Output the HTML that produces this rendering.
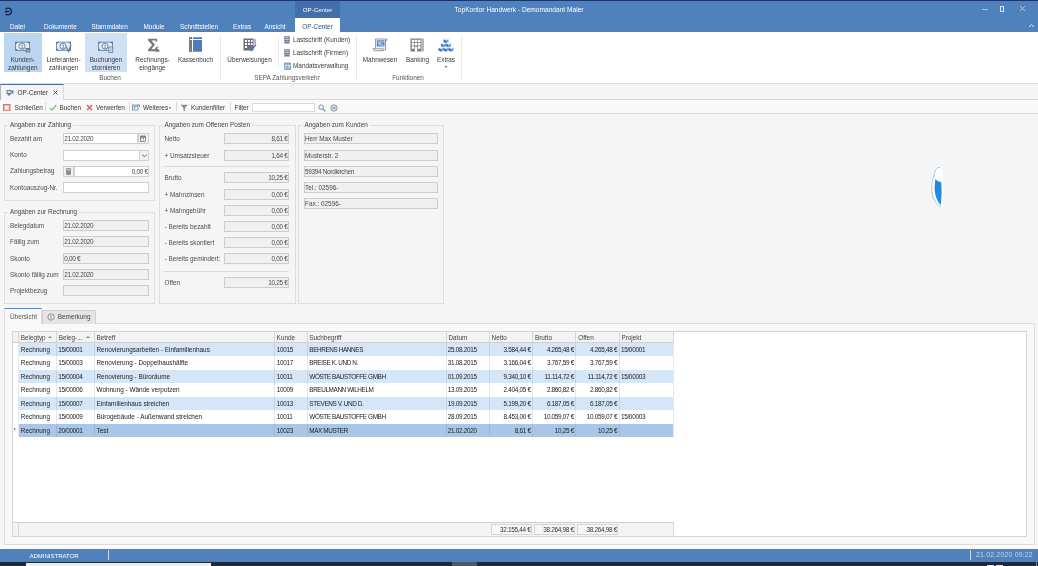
<!DOCTYPE html>
<html lang="de">
<head>
<meta charset="utf-8">
<title>TopKontor Handwerk - Demomandant Maler</title>
<style>
*{box-sizing:border-box;margin:0;padding:0}
html,body{width:1038px;height:566px;overflow:hidden;background:#f5f5f5}
body{position:relative;font-family:"Liberation Sans",sans-serif;font-size:6.4px;color:#3a3a3a;line-height:8px}
#wrap{position:absolute;left:0;top:0;width:1038px;height:566px;will-change:transform}
.a{position:absolute;white-space:nowrap}
.w{color:#fff}
.c{text-align:center}
.r{text-align:right}
/* title */
#title{left:0;top:0;width:1038px;height:31.9px;background:#4f81bd}
#topline{left:0;top:0;width:1038px;height:1px;background:#17356f}
#ctx{left:295px;top:0;width:45px;height:18px;background:#426fa9;border-top:1px solid #1f3f7c}
#acttab{left:295px;top:18px;width:45px;height:14px;background:#fff}
#ribbon{left:0;top:31.9px;width:1038px;height:52.1px;background:#fff;border-bottom:1px solid #dcdcdc}
.hl1{background:#bbd6f1}
.hl2{background:#cfe2f5}
.gsep{width:1px;background:#e9e9e9;top:34.5px;height:45.5px}
.glabel{top:74.2px;color:#555}
/* doc tabs */
#tabstrip{left:0;top:84px;width:1038px;height:16px;background:#f5f5f5;border-bottom:1px solid #dadada}
#doctab{left:0;top:84px;width:64px;height:16px;background:#f3f5f9;border-top:1px solid #526d93;border-right:1px solid #dadada;border-left:1px solid #b4b8be}
#toolbar{left:0;top:100px;width:1038px;height:13.7px;background:#f8f8f8;border-bottom:1px solid #dbdbdb}
.tsep{top:102px;width:1px;height:9px;background:#d8d8d8}
/* groups */
.grp{border:1px solid #dedede}
.gl{background:#f5f5f5;padding:0 2px;color:#444}
.fw{background:#fff;border:1px solid #d0d0d0;height:11px}
.fg{background:#f0f0f0;border:1px solid #cdcdcd;height:11px}
.ft{line-height:9px;padding:0 1.5px 0 0;color:#4a4a4a}
.n{letter-spacing:-0.3px}
.hsep{height:1px;background:#dcdcdc}
/* grid */
#page{left:4px;top:323px;width:1030.8px;height:221.7px;border:1px solid #dcdcdc;background:#f8f8f8}
#grid{left:12px;top:331px;width:1015px;height:206px;border:1px solid #d5d5d5;background:#fff}
#ghead{left:13px;top:332px;width:660.3px;height:11px;background:#f3f3f3;border-bottom:1px solid #d0d0d0}
.row{left:19px;width:654px;height:13.5px}
.ra{background:#d4e6f8}
.rs{background:#a9c6e8}
.cell{line-height:13.5px;color:#222}
.hc{line-height:11px;color:#444}
.vl{width:1px;background:#d6d6d6}
#gfoot{left:13px;top:522px;width:660.3px;height:14px;background:#f3f3f3;border-top:1px solid #d0d0d0}
.sum{top:523.6px;height:11px;border:1px solid #d6d6d6;background:#f6f6f6;line-height:9px;text-align:right;padding-right:0.3px;color:#333}
/* status */
#sgap{left:0;top:545px;width:1038px;height:4px;background:#fafafa}
#status{left:0;top:548.5px;width:1038px;height:13px;background:#4f81bd}
#task{left:0;top:561.5px;width:1038px;height:5px;background:#1b2b38}
</style>
</head>
<body>
<div id="wrap">
<!-- TITLE BAR -->
<div class="a" id="title"></div>
<div class="a" id="topline"></div>
<div class="a" id="ctx"></div>
<div class="a" id="acttab"></div>
<div class="a w c" style="left:295px;top:5.8px;width:45px;font-size:6.2px">OP-Center</div>
<div class="a w" style="left:454.5px;top:6px;font-size:6.6px">TopKontor Handwerk - Demomandant Maler</div>
<div class="a w" style="left:10px;top:23px">Datei</div>
<div class="a w" style="left:44px;top:23px">Dokumente</div>
<div class="a w" style="left:91.5px;top:23px">Stammdaten</div>
<div class="a w" style="left:143.5px;top:23px">Module</div>
<div class="a w" style="left:180px;top:23px">Schnittstellen</div>
<div class="a w" style="left:233px;top:23px">Extras</div>
<div class="a w" style="left:264.5px;top:23px">Ansicht</div>
<div class="a c" style="left:295px;top:23px;width:45px;color:#33507c">OP-Center</div>

<!-- RIBBON -->
<div class="a" id="ribbon"></div>


<!-- ribbon buttons -->
<div class="a hl1" style="left:3.5px;top:33px;width:38.5px;height:39px"></div>
<div class="a hl2" style="left:85px;top:33px;width:42px;height:39px"></div>
<svg class="a" style="left:14.5px;top:40.500px" width="16" height="12" viewBox="0 0 32 24"><rect x="1.200" y="2.200" width="28" height="16.500" fill="#e4edf7" stroke="#5d7894" stroke-width="1.600"/><path d="M1 2h5l-5 5zM29.500 2h-5l5 5zM1 19h5l-5-5zM29.500 19h-5l5-5z" fill="#58728f"/><ellipse cx="14" cy="10.500" rx="6.200" ry="6.200" fill="#eef4fb" stroke="#58728f" stroke-width="1.700"/><path d="M12.200 9.500l2.300-2.300v7.200M12 14.400h5" fill="none" stroke="#5f86b3" stroke-width="1.500"/><path d="M21 14h9.500v9H21z" fill="#66788f"/><path d="M24 16.500v5M27.500 17.500v4" stroke="#dfe9f5" stroke-width="1.300"/></svg>
<svg class="a" style="left:55.5px;top:40.500px" width="16" height="12" viewBox="0 0 32 24"><rect x="1.200" y="2.200" width="28" height="16.500" fill="#e4edf7" stroke="#5d7894" stroke-width="1.600"/><path d="M1 2h5l-5 5zM29.500 2h-5l5 5zM1 19h5l-5-5zM29.500 19h-5l5-5z" fill="#58728f"/><ellipse cx="14" cy="10.500" rx="6.200" ry="6.200" fill="#eef4fb" stroke="#58728f" stroke-width="1.700"/><path d="M12.200 9.500l2.300-2.300v7.200M12 14.400h5" fill="none" stroke="#5f86b3" stroke-width="1.500"/><path d="M20 11l5 10 5-13" fill="none" stroke="#6d7c8e" stroke-width="2.600"/></svg>
<svg class="a" style="left:97.5px;top:40.500px" width="16" height="12" viewBox="0 0 32 24"><rect x="1.200" y="2.200" width="28" height="16.500" fill="#e4edf7" stroke="#5d7894" stroke-width="1.600"/><path d="M1 2h5l-5 5zM29.500 2h-5l5 5zM1 19h5l-5-5zM29.500 19h-5l5-5z" fill="#58728f"/><ellipse cx="14" cy="10.500" rx="6.200" ry="6.200" fill="#eef4fb" stroke="#58728f" stroke-width="1.700"/><path d="M12.200 9.500l2.300-2.300v7.200M12 14.400h5" fill="none" stroke="#5f86b3" stroke-width="1.500"/><path d="M21.500 12h8v11h-8z" fill="#e6edf6" stroke="#66788f" stroke-width="1.700"/><path d="M23.500 16h4M23.500 19.500h4" stroke="#66788f" stroke-width="1.200"/></svg>
<div class="a c" style="left:3.5px;top:56px;width:38.5px">Kunden-<br>zahlungen</div>
<div class="a c" style="left:43px;top:56px;width:41px">Lieferanten-<br>zahlungen</div>
<div class="a c" style="left:85px;top:56px;width:42px">Buchungen<br>stornieren</div>
<!-- sigma -->
<svg class="a" style="left:146.7px;top:37.8px" width="13.5" height="14" viewBox="0 0 28 28"><path d="M2 1h19v6h-3V4.500H9.500l7 9-7.500 9.500h8v-3h3.500v7H2v-3l8.500-10L2 4z" fill="#76787c"/><path d="M17.500 19c1.500-2.500 5-2.500 7-1l-1 2c-1.500-1-3.500-1-4 0 2 1.500 6 2 6.500 5.500v2.500h-8.500z" fill="#6f7f96"/></svg>
<div class="a c" style="left:130px;top:56px;width:45px">Rechnungs-<br>eingänge</div>
<!-- kassenbuch -->
<svg class="a" style="left:188.8px;top:37px" width="13.5" height="15" viewBox="0 0 27 30"><rect x="0.500" y="0.500" width="26" height="29" fill="#4a7ebb"/><rect x="0.500" y="0.500" width="5.500" height="29" fill="#76787c"/><rect x="6" y="0.500" width="2" height="29" fill="#fff"/><rect x="2" y="4" width="24.500" height="2" fill="#eef3f9"/></svg>
<div class="a c" style="left:175px;top:56px;width:41px">Kassenbuch</div>
<div class="a gsep" style="left:220px"></div>
<div class="a c glabel" style="left:90px;width:40px">Buchen</div>
<!-- ueberweisungen -->
<svg class="a" style="left:243px;top:38px" width="14" height="14" viewBox="0 0 28 28"><rect x="1" y="1" width="20" height="24" fill="#6d6f73"/><path d="M4 4h4v4H4zM10 4h4v4h-4zM16 4h3v4h-3zM4 10h4v4H4zM10 10h4v4h-4zM16 10h3v4h-3zM4 16h4v4H4z" fill="#fff"/><path d="M24 2v10" stroke="#6d6f73" stroke-width="2"/><path d="M11 20l5 5 10-12" fill="none" stroke="#4a7ebb" stroke-width="3"/></svg>
<div class="a c" style="left:224px;top:56px;width:51px">Überweisungen</div>
<div class="a" style="left:277.5px;top:37px;width:1px;height:30px;background:#ececec"></div>
<!-- small items -->
<svg class="a" style="left:284px;top:36px" width="6" height="8" viewBox="0 0 12 16"><rect x="0.5" y="0.5" width="11" height="10" fill="#63718a"/><path d="M1 3.500h10M1 7h10" stroke="#e4e9f1" stroke-width="1.300"/><path d="M6 0v10" stroke="#e4e9f1" stroke-width="0.800"/><path d="M2 10v6M6 10v6M10 10v6M2 13h8" stroke="#63718a" stroke-width="1.800"/></svg>
<svg class="a" style="left:284px;top:48.5px" width="6" height="8" viewBox="0 0 12 16"><rect x="0.5" y="0.5" width="11" height="10" fill="#63718a"/><path d="M1 3.500h10M1 7h10" stroke="#e4e9f1" stroke-width="1.300"/><path d="M6 0v10" stroke="#e4e9f1" stroke-width="0.800"/><path d="M2 10v6M6 10v6M10 10v6M2 13h8" stroke="#63718a" stroke-width="1.800"/></svg>
<svg class="a" style="left:283.5px;top:61.5px" width="7" height="8" viewBox="0 0 14 16"><rect x="1" y="2" width="12" height="13" fill="#eef3f9" stroke="#6f97c8" stroke-width="1.600"/><path d="M1 4h12" stroke="#5f86b8" stroke-width="2.200"/><path d="M4.500 7v7M7.500 7v7M10.500 9v5" stroke="#6d7683" stroke-width="1.600"/></svg>
<div class="a" style="left:293px;top:36.4px">Lastschrift (Kunden)</div>
<div class="a" style="left:293px;top:48.9px">Lastschrift (Firmen)</div>
<div class="a" style="left:293px;top:61.8px">Mandatsverwaltung</div>
<div class="a c glabel" style="left:247px;width:80px">SEPA Zahlungsverkehr</div>
<div class="a gsep" style="left:355.5px"></div>
<!-- Mahnwesen -->
<svg class="a" style="left:372px;top:38px" width="17" height="14" viewBox="0 0 34 28"><path d="M7 2h22.500v3H27v19H7z" fill="#f5f7fa" stroke="#7a7d82" stroke-width="1.500"/><path d="M27 5.500l3-3.500" stroke="#7a7d82" stroke-width="1.500"/><path d="M1.500 21.500h21v4H4.500z" fill="#f5f7fa" stroke="#7a7d82" stroke-width="1.500"/><rect x="9.500" y="4.500" width="15.500" height="12.500" fill="#5a8ccb"/><path d="M12 8h11M12 11h6M14 14h9" stroke="#e4edf8" stroke-width="1.500"/></svg>
<div class="a c" style="left:359px;top:56px;width:42px">Mahnwesen</div>
<!-- Banking -->
<svg class="a" style="left:409.8px;top:38px" width="14.500" height="14" viewBox="0 0 29 28"><rect x="1" y="1" width="22" height="26" fill="#7b7d80"/><rect x="23" y="1" width="5" height="26" fill="#b4b6b9"/><path d="M3.500 3.500h5v5h-5zM9.700 3.500h5v5h-5zM16 3.500h5v5h-5zM3.500 10h5v5h-5zM9.700 10h5v5h-5zM16 10h5v5h-5zM3.500 16.500h5v5h-5zM16 16.500h5v5h-5zM9.700 17.500h5v9.500h-5z" fill="#fff"/></svg>
<div class="a c" style="left:402px;top:56px;width:31px">Banking</div>
<!-- Extras -->
<svg class="a" style="left:438px;top:37.500px" width="16" height="14" viewBox="0 0 32 28"><path d="M11 2.5l5-2.500 5 2.500-5 2.500z" fill="#eaf1fa"/><path d="M11 2.5l5 2.500v5.500l-5-2.500z" fill="#3f73bb"/><path d="M21 2.5l-5 2.500v5.500l5-2.500z" fill="#6b9ad6"/><path d="M6 11.0l5-2.500 5 2.500-5 2.500z" fill="#eaf1fa"/><path d="M6 11.0l5 2.500v5.500l-5-2.500z" fill="#3f73bb"/><path d="M16 11.0l-5 2.500v5.500l5-2.500z" fill="#6b9ad6"/><path d="M16 11.0l5-2.500 5 2.500-5 2.500z" fill="#eaf1fa"/><path d="M16 11.0l5 2.500v5.500l-5-2.500z" fill="#3f73bb"/><path d="M26 11.0l-5 2.500v5.500l5-2.500z" fill="#6b9ad6"/><path d="M1 19.5l5-2.500 5 2.500-5 2.500z" fill="#eaf1fa"/><path d="M1 19.5l5 2.500v5.500l-5-2.500z" fill="#3f73bb"/><path d="M11 19.5l-5 2.500v5.500l5-2.500z" fill="#6b9ad6"/><path d="M11 19.5l5-2.500 5 2.500-5 2.500z" fill="#eaf1fa"/><path d="M11 19.5l5 2.500v5.500l-5-2.500z" fill="#3f73bb"/><path d="M21 19.5l-5 2.500v5.500l5-2.500z" fill="#6b9ad6"/><path d="M21 19.5l5-2.500 5 2.500-5 2.500z" fill="#eaf1fa"/><path d="M21 19.5l5 2.500v5.500l-5-2.500z" fill="#3f73bb"/><path d="M31 19.5l-5 2.500v5.500l5-2.500z" fill="#6b9ad6"/></svg>
<div class="a c" style="left:432px;top:56px;width:28px">Extras</div>
<div class="a" style="left:445.2px;top:66.3px;width:0;height:0;border-left:1.800px solid transparent;border-right:1.800px solid transparent;border-top:2.200px solid #333"></div>
<div class="a c glabel" style="left:388px;width:40px">Funktionen</div>
<div class="a gsep" style="left:461px"></div>
<!-- window controls -->
<div class="a" style="left:982px;top:9px;width:6px;height:1px;background:#a9c2e0"></div>
<div class="a" style="left:999.500px;top:6px;width:4.500px;height:6px;border:1px solid #dfe8f4"></div>
<svg class="a" style="left:1019px;top:5px" width="7" height="7" viewBox="0 0 14 14"><path d="M2 2l10 10M12 2L2 12" stroke="#cfdcee" stroke-width="1.5"/></svg>
<svg class="a" style="left:1028px;top:23px" width="7" height="5" viewBox="0 0 14 10"><path d="M2 8l5-5 5 5" fill="none" stroke="#eef3fa" stroke-width="1.8"/></svg>
<!-- app icon -->
<svg class="a" style="left:4px;top:7.2px" width="8.5" height="9" viewBox="0 0 18 20"><path d="M3 5a7.5 7.5 0 1 1 0 10" fill="none" stroke="#14254f" stroke-width="3.2"/><path d="M1 10h10" stroke="#14254f" stroke-width="3.2"/></svg>

<!-- DOC TABS + TOOLBAR -->
<div class="a" id="tabstrip"></div>
<div class="a" id="doctab"></div>
<div class="a" id="toolbar"></div>


<svg class="a" style="left:5.500px;top:88.500px" width="8" height="8" viewBox="0 0 16 16"><path d="M1 2h10v7l-5 5-5-5z" fill="#6f7f95"/><path d="M3 4h6v4H3z" fill="#dfe6ef"/><path d="M11 3h4v6h-3" fill="#4a7ebb"/></svg>
<div class="a" style="left:17.500px;top:88.500px;color:#333">OP-Center</div>
<svg class="a" style="left:53px;top:90px" width="5" height="5" viewBox="0 0 10 10"><path d="M1 1l8 8M9 1L1 9" stroke="#333" stroke-width="1.6"/></svg>
<!-- toolbar items -->
<svg class="a" style="left:3.4px;top:103.6px" width="7.5" height="7.5" viewBox="0 0 16 16"><rect x="1" y="1" width="14" height="14" fill="#eeb3ae" stroke="#d4716a" stroke-width="2"/><path d="M4.500 4.500l7 7M11.500 4.500l-7 7" stroke="#fff" stroke-width="2.600"/></svg>
<div class="a" style="left:14.500px;top:103.500px">Schließen</div>
<div class="a tsep" style="left:45px"></div>
<svg class="a" style="left:49px;top:104px" width="8" height="7" viewBox="0 0 16 14"><path d="M1.500 8l4.500 4 8.500-10" fill="none" stroke="#84ca82" stroke-width="3"/></svg>
<div class="a" style="left:59.500px;top:103.500px">Buchen</div>
<svg class="a" style="left:86px;top:104px" width="7" height="7" viewBox="0 0 14 14"><path d="M2 2l10 10M12 2L2 12" stroke="#d9665f" stroke-width="3.200"/></svg>
<div class="a" style="left:96px;top:103.500px">Verwerfen</div>
<div class="a tsep" style="left:128.500px"></div>
<svg class="a" style="left:132px;top:104px" width="8" height="7" viewBox="0 0 16 14"><rect x="1" y="2" width="11" height="10" fill="#f3f6fa" stroke="#7a8088" stroke-width="1.600"/><path d="M3 5h7M3 8h4" stroke="#4a7ebb" stroke-width="1.600"/><path d="M12 2h3v4" fill="none" stroke="#4a7ebb" stroke-width="1.600"/></svg>
<div class="a" style="left:143px;top:103.500px">Weiteres</div>
<div class="a" style="left:169px;top:107px;width:0;height:0;border-left:1.500px solid transparent;border-right:1.500px solid transparent;border-top:2px solid #555"></div>
<div class="a tsep" style="left:176px"></div>
<svg class="a" style="left:180px;top:103.500px" width="8.500" height="8" viewBox="0 0 16 14"><path d="M1 1h14l-5.500 6v6l-3-1.500V7z" fill="#8a8f96"/></svg>
<div class="a" style="left:191px;top:103.500px">Kundenfilter</div>
<div class="a tsep" style="left:230px"></div>
<div class="a" style="left:234.500px;top:103.500px">Filter</div>
<div class="a" style="left:251.500px;top:102.500px;width:63px;height:9.500px;background:#fff;border:1px solid #dadada"></div>
<svg class="a" style="left:317.500px;top:103.500px" width="8" height="8" viewBox="0 0 14 14"><circle cx="5.500" cy="5.500" r="4" fill="#eaf1f9" stroke="#6f8fb8" stroke-width="1.600"/><path d="M8.500 8.500l4.500 4.500" stroke="#7a8088" stroke-width="2.200"/></svg>
<svg class="a" style="left:330px;top:103.500px" width="8" height="8" viewBox="0 0 14 14"><circle cx="7" cy="7" r="5.500" fill="#dfe6ef" stroke="#7f8fa6" stroke-width="1.600"/><path d="M4 5l6 4M10 5l-6 4" stroke="#7f8fa6" stroke-width="1.400"/></svg>

<!-- FORM -->
<div class="a grp" style="left:4px;top:125px;width:150.5px;height:76px"></div>
<div class="a gl" style="left:8px;top:121px">Angaben zur Zahlung</div>
<div class="a" style="left:10px;top:134.8px;color:#4c4c4c">Bezahlt am</div>
<div class="a fw ft n" style="left:63.2px;top:133.0px;width:74.8px">21.02.2020</div>
<div class="a" style="left:137.5px;top:133px;width:11.2px;height:11px;background:#f1f1f1;border:1px solid #d0d0d0"></div>
<svg class="a" style="left:140px;top:135px" width="6" height="7" viewBox="0 0 12 14"><rect x="1" y="2" width="10" height="11" fill="#fff" stroke="#666" stroke-width="1.4"/><path d="M1 4h10" stroke="#555" stroke-width="2.4"/><path d="M3 7h6M3 10h6" stroke="#4a7ebb" stroke-width="1.6" stroke-dasharray="2 1"/></svg>
<div class="a" style="left:10px;top:150.8px;color:#4c4c4c">Konto</div>
<div class="a fw ft" style="left:63.2px;top:149.7px;width:76.8px"></div>
<div class="a" style="left:139.4px;top:149.7px;width:9.3px;height:11px;background:#f1f1f1;border:1px solid #d0d0d0"></div>
<svg class="a" style="left:141.5px;top:153.5px" width="5" height="4" viewBox="0 0 10 8"><path d="M1 1l4 5 4-5" fill="none" stroke="#666" stroke-width="1.8"/></svg>
<div class="a" style="left:10px;top:166.8px;color:#4c4c4c">Zahlungsbetrag</div>
<div class="a" style="left:63.2px;top:165.5px;width:11.2px;height:11px;background:#f1f1f1;border:1px solid #d0d0d0"></div>
<svg class="a" style="left:66.2px;top:167.5px" width="5" height="7" viewBox="0 0 10 14"><rect x="0.5" y="0.5" width="9" height="13" fill="#777"/><rect x="2" y="2" width="6" height="3" fill="#ccc"/><path d="M2 7h6M2 9.5h6M2 12h6" stroke="#bbb" stroke-width="1" stroke-dasharray="1.5 0.8"/></svg>
<div class="a fw ft n" style="left:73.7px;top:165.5px;width:74.99999999999999px;text-align:right;padding-right:0px">0,00 €</div>
<div class="a" style="left:10px;top:183.5px;color:#4c4c4c">Kontoauszug-Nr.</div>
<div class="a fw ft" style="left:63.2px;top:182.0px;width:85.49999999999999px"></div>
<div class="a grp" style="left:4px;top:212px;width:150.5px;height:92.30000000000001px"></div>
<div class="a gl" style="left:8px;top:208px">Angaben zur Rechnung</div>
<div class="a" style="left:10px;top:222.0px;color:#4c4c4c">Belegdatum</div>
<div class="a fg ft n" style="left:63.2px;top:220.0px;width:85.49999999999999px">21.02.2020</div>
<div class="a" style="left:10px;top:238.2px;color:#4c4c4c">Fällig zum</div>
<div class="a fg ft n" style="left:63.2px;top:236.2px;width:85.49999999999999px">21.02.2020</div>
<div class="a" style="left:10px;top:254.5px;color:#4c4c4c">Skonto</div>
<div class="a fg ft n" style="left:63.2px;top:252.5px;width:85.49999999999999px">0,00 €</div>
<div class="a" style="left:10px;top:270.7px;color:#4c4c4c">Skonto fällig zum</div>
<div class="a fg ft n" style="left:63.2px;top:268.7px;width:85.49999999999999px">21.02.2020</div>
<div class="a" style="left:10px;top:287.0px;color:#4c4c4c">Projektbezug</div>
<div class="a fg ft" style="left:63.2px;top:285.0px;width:85.49999999999999px"></div>
<div class="a grp" style="left:158.5px;top:125px;width:137.5px;height:179.3px"></div>
<div class="a gl" style="left:162.5px;top:121px">Angaben zum Offenen Posten</div>
<div class="a" style="left:164.5px;top:135.0px;color:#4c4c4c">Netto</div>
<div class="a fg ft n" style="left:224px;top:133.0px;width:65px;text-align:right;padding-right:0.5px">8,61 €</div>
<div class="a" style="left:164.5px;top:151.5px;color:#4c4c4c">+ Umsatzsteuer</div>
<div class="a fg ft n" style="left:224px;top:149.5px;width:65px;text-align:right;padding-right:0.5px">1,64 €</div>
<div class="a" style="left:164.5px;top:173.8px;color:#4c4c4c">Brutto</div>
<div class="a fg ft n" style="left:224px;top:171.8px;width:65px;text-align:right;padding-right:0.5px">10,25 €</div>
<div class="a" style="left:164.5px;top:191.0px;color:#4c4c4c">+ Mahnzinsen</div>
<div class="a fg ft n" style="left:224px;top:189.0px;width:65px;text-align:right;padding-right:0.5px">0,00 €</div>
<div class="a" style="left:164.5px;top:207.0px;color:#4c4c4c">+ Mahngebühr</div>
<div class="a fg ft n" style="left:224px;top:205.0px;width:65px;text-align:right;padding-right:0.5px">0,00 €</div>
<div class="a" style="left:164.5px;top:223.0px;color:#4c4c4c">- Bereits bezahlt</div>
<div class="a fg ft n" style="left:224px;top:221.0px;width:65px;text-align:right;padding-right:0.5px">0,00 €</div>
<div class="a" style="left:164.5px;top:238.9px;color:#4c4c4c">- Bereits skontiert</div>
<div class="a fg ft n" style="left:224px;top:236.9px;width:65px;text-align:right;padding-right:0.5px">0,00 €</div>
<div class="a" style="left:164.5px;top:255.2px;color:#4c4c4c">- Bereits gemindert:</div>
<div class="a fg ft n" style="left:224px;top:253.2px;width:65px;text-align:right;padding-right:0.5px">0,00 €</div>
<div class="a" style="left:164.5px;top:278.8px;color:#4c4c4c">Offen</div>
<div class="a fg ft n" style="left:224px;top:276.8px;width:65px;text-align:right;padding-right:0.5px">10,25 €</div>
<div class="a hsep" style="left:163px;top:166px;width:126px"></div>
<div class="a hsep" style="left:163px;top:270.5px;width:126px"></div>
<div class="a grp" style="left:298px;top:125px;width:145.5px;height:179.3px"></div>
<div class="a gl" style="left:302.5px;top:121px">Angaben zum Kunden</div>
<div class="a fg ft" style="left:304px;top:133.2px;width:133.5px">Herr Max Muster</div>
<div class="a fg ft" style="left:304px;top:149.5px;width:133.5px">Musterstr. 2</div>
<div class="a fg ft n" style="left:304px;top:165.5px;width:133.5px">59394 Nordkirchen</div>
<div class="a fg ft" style="left:304px;top:181.7px;width:133.5px">Tel.: 02596-</div>
<div class="a fg ft" style="left:304px;top:198.2px;width:133.5px">Fax.: 02596-</div>
<!-- /FORM -->
<!-- GRID -->
<div class="a" id="page"></div>
<div class="a" style="left:4px;top:308px;width:37.5px;height:16px;background:#f8f8f8;border:1px solid #dcdcdc;border-top:1.5px solid #5b86c0;border-bottom:none"></div>
<div class="a" style="left:42px;top:310px;width:54px;height:13.5px;background:#e4e4e4;border:1px solid #d0d0d0;border-bottom:none"></div>
<div class="a" style="left:10px;top:312.7px;color:#555">Übersicht</div>
<svg class="a" style="left:46.8px;top:313.2px" width="8" height="8" viewBox="0 0 16 16"><circle cx="8" cy="8" r="6.3" fill="#f1f1f1" stroke="#666" stroke-width="1.4"/><path d="M8 4v8" stroke="#666" stroke-width="1.5"/></svg>
<div class="a" style="left:57.8px;top:312.9px;color:#444">Bemerkung</div>
<div class="a" id="grid"></div>
<div class="a" id="ghead"></div>
<div class="a hc" style="left:20.8px;top:332.2px">Belegtyp</div>
<div class="a hc" style="left:58.7px;top:332.2px">Beleg-...</div>
<div class="a hc" style="left:96.5px;top:332.2px">Betreff</div>
<div class="a hc" style="left:276.6px;top:332.2px">Kunde</div>
<div class="a hc" style="left:309.3px;top:332.2px">Suchbegriff</div>
<div class="a hc" style="left:448.5px;top:332.2px">Datum</div>
<div class="a hc" style="left:491.6px;top:332.2px">Netto</div>
<div class="a hc" style="left:534.9px;top:332.2px">Brutto</div>
<div class="a hc" style="left:578.2px;top:332.2px">Offen</div>
<div class="a hc" style="left:621.4px;top:332.2px">Projekt</div>
<div class="a vl" style="left:18.0px;top:332px;height:11px"></div>
<div class="a vl" style="left:55.9px;top:332px;height:11px"></div>
<div class="a vl" style="left:93.7px;top:332px;height:11px"></div>
<div class="a vl" style="left:273.8px;top:332px;height:11px"></div>
<div class="a vl" style="left:306.5px;top:332px;height:11px"></div>
<div class="a vl" style="left:445.7px;top:332px;height:11px"></div>
<div class="a vl" style="left:488.8px;top:332px;height:11px"></div>
<div class="a vl" style="left:532.1px;top:332px;height:11px"></div>
<div class="a vl" style="left:575.4px;top:332px;height:11px"></div>
<div class="a vl" style="left:618.6px;top:332px;height:11px"></div>
<div class="a vl" style="left:672.8px;top:332px;height:11px"></div>
<div class="a" style="left:48.2px;top:336.2px;width:0;height:0;border-left:2px solid transparent;border-right:2px solid transparent;border-bottom:2.4px solid #8a8a8a"></div>
<div class="a" style="left:86.4px;top:336.2px;width:0;height:0;border-left:2px solid transparent;border-right:2px solid transparent;border-bottom:2.4px solid #8a8a8a"></div>
<div class="a row ra" style="left:18.5px;width:654.8px;top:342.5px"></div>
<div class="a cell" style="left:20.8px;top:342.5px">Rechnung</div>
<div class="a cell n" style="left:58.2px;top:342.5px">15/00001</div>
<div class="a cell" style="left:96.5px;top:342.5px">Renovierungsarbeiten - Einfamilienhaus</div>
<div class="a cell n" style="left:276.8px;top:342.5px">10015</div>
<div class="a cell" style="left:309.3px;top:342.5px;letter-spacing:-0.4px">BEHRENS HANNES</div>
<div class="a cell n" style="left:447.7px;top:342.5px">25.08.2015</div>
<div class="a cell r n" style="left:489.3px;top:342.5px;width:41.5px">3.584,44 €</div>
<div class="a cell r n" style="left:532.6px;top:342.5px;width:41.5px">4.265,48 €</div>
<div class="a cell r n" style="left:575.9px;top:342.5px;width:41.4px">4.265,48 €</div>
<div class="a cell n" style="left:620.9px;top:342.5px">15/00001</div>
<div class="a row " style="left:18.5px;width:654.8px;top:356.0px"></div>
<div class="a cell" style="left:20.8px;top:356.0px">Rechnung</div>
<div class="a cell n" style="left:58.2px;top:356.0px">15/00003</div>
<div class="a cell" style="left:96.5px;top:356.0px">Renovierung - Doppelhaushälfte</div>
<div class="a cell n" style="left:276.8px;top:356.0px">10017</div>
<div class="a cell" style="left:309.3px;top:356.0px;letter-spacing:-0.4px">BREISE K. UND N.</div>
<div class="a cell n" style="left:447.7px;top:356.0px">31.08.2015</div>
<div class="a cell r n" style="left:489.3px;top:356.0px;width:41.5px">3.166,04 €</div>
<div class="a cell r n" style="left:532.6px;top:356.0px;width:41.5px">3.767,59 €</div>
<div class="a cell r n" style="left:575.9px;top:356.0px;width:41.4px">3.767,59 €</div>
<div class="a row ra" style="left:18.5px;width:654.8px;top:369.5px"></div>
<div class="a cell" style="left:20.8px;top:369.5px">Rechnung</div>
<div class="a cell n" style="left:58.2px;top:369.5px">15/00004</div>
<div class="a cell" style="left:96.5px;top:369.5px">Renovierung - Büroräume</div>
<div class="a cell n" style="left:276.8px;top:369.5px">10011</div>
<div class="a cell" style="left:309.3px;top:369.5px;letter-spacing:-0.4px">WÖSTE BAUSTOFFE GMBH</div>
<div class="a cell n" style="left:447.7px;top:369.5px">01.09.2015</div>
<div class="a cell r n" style="left:489.3px;top:369.5px;width:41.5px">9.340,10 €</div>
<div class="a cell r n" style="left:532.6px;top:369.5px;width:41.5px">11.114,72 €</div>
<div class="a cell r n" style="left:575.9px;top:369.5px;width:41.4px">11.114,72 €</div>
<div class="a cell n" style="left:620.9px;top:369.5px">15/00003</div>
<div class="a row " style="left:18.5px;width:654.8px;top:383.0px"></div>
<div class="a cell" style="left:20.8px;top:383.0px">Rechnung</div>
<div class="a cell n" style="left:58.2px;top:383.0px">15/00006</div>
<div class="a cell" style="left:96.5px;top:383.0px">Wohnung - Wände verputzen</div>
<div class="a cell n" style="left:276.8px;top:383.0px">10009</div>
<div class="a cell" style="left:309.3px;top:383.0px;letter-spacing:-0.4px">BREULMANN WILHELM</div>
<div class="a cell n" style="left:447.7px;top:383.0px">13.09.2015</div>
<div class="a cell r n" style="left:489.3px;top:383.0px;width:41.5px">2.404,05 €</div>
<div class="a cell r n" style="left:532.6px;top:383.0px;width:41.5px">2.860,82 €</div>
<div class="a cell r n" style="left:575.9px;top:383.0px;width:41.4px">2.860,82 €</div>
<div class="a row ra" style="left:18.5px;width:654.8px;top:396.5px"></div>
<div class="a cell" style="left:20.8px;top:396.5px">Rechnung</div>
<div class="a cell n" style="left:58.2px;top:396.5px">15/00007</div>
<div class="a cell" style="left:96.5px;top:396.5px">Einfamilienhaus streichen</div>
<div class="a cell n" style="left:276.8px;top:396.5px">10013</div>
<div class="a cell" style="left:309.3px;top:396.5px;letter-spacing:-0.4px">STEVENS V. UND D.</div>
<div class="a cell n" style="left:447.7px;top:396.5px">19.09.2015</div>
<div class="a cell r n" style="left:489.3px;top:396.5px;width:41.5px">5.199,20 €</div>
<div class="a cell r n" style="left:532.6px;top:396.5px;width:41.5px">6.187,05 €</div>
<div class="a cell r n" style="left:575.9px;top:396.5px;width:41.4px">6.187,05 €</div>
<div class="a row " style="left:18.5px;width:654.8px;top:410.0px"></div>
<div class="a cell" style="left:20.8px;top:410.0px">Rechnung</div>
<div class="a cell n" style="left:58.2px;top:410.0px">15/00009</div>
<div class="a cell" style="left:96.5px;top:410.0px">Bürogebäude - Außenwand streichen</div>
<div class="a cell n" style="left:276.8px;top:410.0px">10011</div>
<div class="a cell" style="left:309.3px;top:410.0px;letter-spacing:-0.4px">WÖSTE BAUSTOFFE GMBH</div>
<div class="a cell n" style="left:447.7px;top:410.0px">28.09.2015</div>
<div class="a cell r n" style="left:489.3px;top:410.0px;width:41.5px">8.453,00 €</div>
<div class="a cell r n" style="left:532.6px;top:410.0px;width:41.5px">10.059,07 €</div>
<div class="a cell r n" style="left:575.9px;top:410.0px;width:41.4px">10.059,07 €</div>
<div class="a cell n" style="left:620.9px;top:410.0px">15/00003</div>
<div class="a row rs" style="left:18.5px;width:654.8px;top:423.5px"></div>
<div class="a cell" style="left:20.8px;top:423.5px">Rechnung</div>
<div class="a cell n" style="left:58.2px;top:423.5px">20/00001</div>
<div class="a cell" style="left:96.5px;top:423.5px">Test</div>
<div class="a cell n" style="left:276.8px;top:423.5px">10023</div>
<div class="a cell" style="left:309.3px;top:423.5px;letter-spacing:-0.4px">MAX MUSTER</div>
<div class="a cell n" style="left:447.7px;top:423.5px">21.02.2020</div>
<div class="a cell r n" style="left:489.3px;top:423.5px;width:41.5px">8,61 €</div>
<div class="a cell r n" style="left:532.6px;top:423.5px;width:41.5px">10,25 €</div>
<div class="a cell r n" style="left:575.9px;top:423.5px;width:41.4px">10,25 €</div>
<div class="a" style="left:18.0px;top:343px;width:1px;height:94px;background:rgba(90,120,160,0.16)"></div>
<div class="a" style="left:55.9px;top:343px;width:1px;height:94px;background:rgba(90,120,160,0.16)"></div>
<div class="a" style="left:93.7px;top:343px;width:1px;height:94px;background:rgba(90,120,160,0.16)"></div>
<div class="a" style="left:273.8px;top:343px;width:1px;height:94px;background:rgba(90,120,160,0.16)"></div>
<div class="a" style="left:306.5px;top:343px;width:1px;height:94px;background:rgba(90,120,160,0.16)"></div>
<div class="a" style="left:445.7px;top:343px;width:1px;height:94px;background:rgba(90,120,160,0.16)"></div>
<div class="a" style="left:488.8px;top:343px;width:1px;height:94px;background:rgba(90,120,160,0.16)"></div>
<div class="a" style="left:532.1px;top:343px;width:1px;height:94px;background:rgba(90,120,160,0.16)"></div>
<div class="a" style="left:575.4px;top:343px;width:1px;height:94px;background:rgba(90,120,160,0.16)"></div>
<div class="a" style="left:618.6px;top:343px;width:1px;height:94px;background:rgba(90,120,160,0.16)"></div>
<div class="a" style="left:672.8px;top:343px;width:1px;height:94px;background:rgba(90,120,160,0.16)"></div>
<div class="a" style="left:14.3px;top:428.3px;width:0;height:0;border-top:1.8px solid transparent;border-bottom:1.8px solid transparent;border-left:2.4px solid #555"></div>
<div class="a" id="gfoot"></div>
<div class="a vl" style="left:18.0px;top:522px;height:14px"></div>
<div class="a sum n" style="left:490.5px;width:41.3px">32.155,44 €</div>
<div class="a sum n" style="left:533.8px;width:41.3px">38.264,98 €</div>
<div class="a sum n" style="left:577.1px;width:41.2px">38.264,98 €</div>
<div class="a vl" style="left:672.8px;top:522px;height:14px"></div>
<!-- /GRID -->
<svg class="a" style="left:928px;top:164px" width="18" height="46" viewBox="0 0 18 46"><path d="M10 2.500C5 2.500 2.500 14 2.500 24c0 9 5 16 10.500 19.500l2-2C15.500 30 15.500 14 15 7c-1-3-2.500-4.500-5-4.500z" fill="#fcfdfe"/><path d="M12 3.500C8 2.800 6.500 7 6 12 3.500 18 2.800 26 5 33c2 5 5 8 7.800 9.800" fill="none" stroke="#7fa9d2" stroke-width="0.700"/><path d="M7.500 15c1.500 2 3.500 3 5.700 3 .5 8 .5 16-.5 23C8 36 5 27 7.500 15z" fill="#2489d6"/></svg>
<!-- STATUS -->
<div class="a" id="sgap"></div>
<div class="a" id="status"></div>
<div class="a" id="task"></div>
<div class="a w" style="left:29.500px;top:551.500px;font-size:6px">ADMINISTRATOR</div>
<div class="a" style="left:108px;top:550px;width:1px;height:10px;background:#c9d8ec"></div>
<div class="a" style="left:970px;top:550px;width:1px;height:10px;background:#c9d8ec"></div>
<div class="a" style="left:976px;top:551.3px;font-size:7px;letter-spacing:0.15px;color:#c6d1e1">21.02.2020 09:22</div>
<div class="a" style="left:26px;top:562.500px;width:185px;height:4px;background:#f1efe6"></div>
<div class="a" style="left:451.500px;top:561.500px;width:25px;height:5px;background:#4b5b66"></div>
<div class="a" style="left:987px;top:564.500px;width:7px;height:2px;background:#e8e8e8"></div>
<div class="a" style="left:996px;top:564.500px;width:7px;height:2px;background:#e8e8e8"></div>
<div class="a" style="left:1035.5px;top:561.5px;width:1px;height:5px;background:#7a8791"></div>
</div>
</body>
</html>
